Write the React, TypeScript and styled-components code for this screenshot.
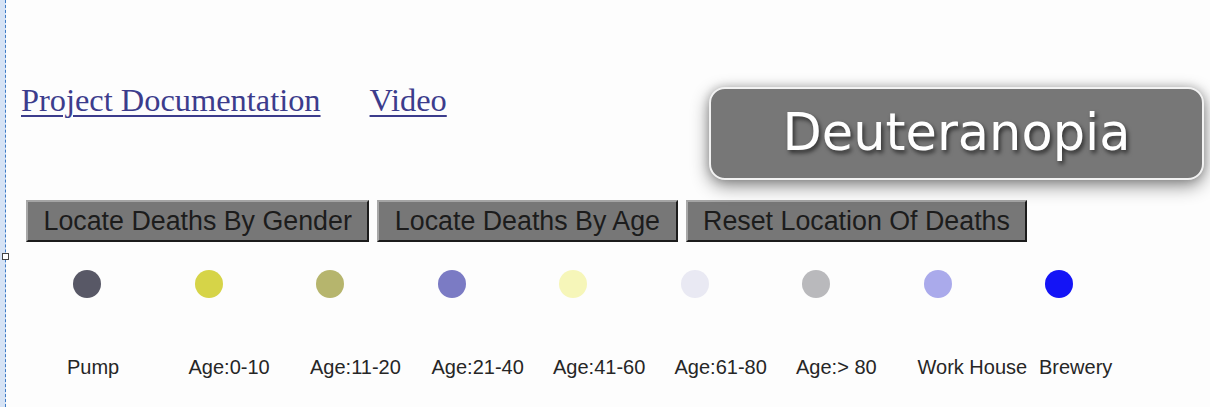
import React from "react";
import styled, { createGlobalStyle } from "styled-components";

const GlobalStyle = createGlobalStyle`
  html, body { margin: 0; padding: 0; background: #fdfdfd; }
  body { width: 1210px; height: 407px; overflow: hidden; }
`;

const Page = styled.div`
  position: relative;
  display: flex;
  width: 1210px;
  height: 407px;
  background: #fdfdfd;
`;

const Rail = styled.div`
  position: relative;
  flex: 0 0 5px;
  background: #d6e3f5;
  border-right: 1px dashed #3f7cc6;
`;

const Handle = styled.span`
  position: absolute;
  left: 2px;
  top: 253px;
  width: 5px;
  height: 5px;
  background: #fff;
  border: 1px solid #444;
`;

const Content = styled.main`
  flex: 1;
  display: flex;
  flex-direction: column;
  padding-left: 15px;
`;

const LinkRow = styled.nav`
  display: flex;
  gap: 49px;
  margin-top: 82px;
  height: 36px;
`;

const DocLink = styled.a`
  font-family: "Liberation Serif", "Times New Roman", serif;
  font-size: 32.4px;
  line-height: 36px;
  color: #3c3c8c;
  text-decoration: underline;
  text-decoration-thickness: 2px;
  text-underline-offset: 4px;
  cursor: pointer;
`;

const ButtonRow = styled.div`
  display: flex;
  gap: 8px;
  margin-top: 82px;
  margin-left: 5px;
`;

const ActionButton = styled.button`
  box-sizing: border-box;
  height: 42px;
  padding: 0 15.5px;
  background: #777777;
  color: #1c1c1c;
  font-family: "Liberation Sans", Arial, sans-serif;
  font-size: 26.8px;
  line-height: 38px;
  border-style: solid;
  border-width: 2px;
  border-color: #a4a4a4 #1c1c1c #1c1c1c #a8a8a8;
  border-radius: 0;
  cursor: pointer;
`;

const Legend = styled.ul`
  display: flex;
  list-style: none;
  margin: 28px 0 0 46px;
  padding: 0;
`;

const LegendItem = styled.li`
  flex: 0 0 121.5px;
  display: flex;
  flex-direction: column;
  align-items: flex-start;
`;

const Dot = styled.span<{ $color: string }>`
  display: block;
  width: 28px;
  height: 28px;
  margin-left: 6px;
  border-radius: 50%;
  background: ${(p) => p.$color};
`;

const LegendLabel = styled.span`
  margin-top: 58px;
  font-family: "Liberation Sans", Arial, sans-serif;
  font-size: 20px;
  line-height: 23px;
  color: #262626;
  white-space: nowrap;
`;

const Badge = styled.div`
  position: absolute;
  left: 709px;
  top: 87px;
  box-sizing: border-box;
  width: 495px;
  height: 93px;
  display: flex;
  align-items: center;
  justify-content: center;
  background: #777777;
  border: 2px solid #f2f2f2;
  border-radius: 16px;
  box-shadow: 0 6px 18px rgba(0, 0, 0, 0.45), 0 0 10px rgba(0, 0, 0, 0.2);
  font-family: "DejaVu Sans", "Lucida Grande", sans-serif;
  font-size: 51px;
  color: #ffffff;
  text-shadow: 2px 3px 4px rgba(0, 0, 0, 0.6);
  padding-bottom: 2px;
`;

const legend = [
  { label: "Pump", color: "#585866" },
  { label: "Age:0-10", color: "#d6d448" },
  { label: "Age:11-20", color: "#b6b56d" },
  { label: "Age:21-40", color: "#7b7bc4" },
  { label: "Age:41-60", color: "#f6f6b9" },
  { label: "Age:61-80", color: "#e9e9f3" },
  { label: "Age:> 80", color: "#b9b9bc" },
  { label: "Work House", color: "#aaaaeb" },
  { label: "Brewery", color: "#1414f6" },
];

export default function App() {
  return (
    <>
      <GlobalStyle />
      <Page>
        <Rail>
          <Handle />
        </Rail>
        <Content>
          <LinkRow>
            <DocLink>Project Documentation</DocLink>
            <DocLink>Video</DocLink>
          </LinkRow>
          <ButtonRow>
            <ActionButton>Locate Deaths By Gender</ActionButton>
            <ActionButton>Locate Deaths By Age</ActionButton>
            <ActionButton>Reset Location Of Deaths</ActionButton>
          </ButtonRow>
          <Legend>
            {legend.map((item) => (
              <LegendItem key={item.label}>
                <Dot $color={item.color} />
                <LegendLabel>{item.label}</LegendLabel>
              </LegendItem>
            ))}
          </Legend>
        </Content>
        <Badge>Deuteranopia</Badge>
      </Page>
    </>
  );
}
